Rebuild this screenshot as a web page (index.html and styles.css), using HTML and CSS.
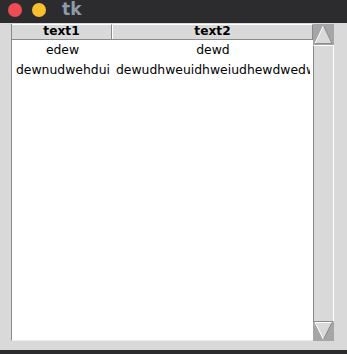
FILE: index.html
```html
<!DOCTYPE html>
<html>
<head>
<meta charset="utf-8">
<link rel="stylesheet" href="styles.css">
</head>
<body>
<div class="window">
  <div class="titlebar">
    <span class="dot red"></span>
    <span class="dot yellow"></span>
    <span class="title">tk</span>
  </div>
  <div class="content">
    <div class="tree">
      <div class="header">
        <div class="hcell h1">text1</div>
        <div class="hcell h2">text2</div>
      </div>
      <div class="row">
        <div class="cell c1">edew</div>
        <div class="cell c2">dewd</div>
      </div>
      <div class="row">
        <div class="cell c1 left">dewnudwehdui</div>
        <div class="cell c2 left">dewudhweuidhweiudhewdwedwe</div>
      </div>
    </div>
    <div class="scrollbar">
      <div class="arrow up">
        <svg width="21" height="21" viewBox="0 0 21 21">
          <polygon points="10.5,1.5 2,19.5 19,19.5" fill="#d9d9d9"/>
          <line x1="10.5" y1="1.5" x2="2" y2="19.5" stroke="#ffffff" stroke-width="1"/>
          <line x1="10.5" y1="1.5" x2="19" y2="19.5" stroke="#8a8a8a" stroke-width="1"/>
          <line x1="2" y1="19.5" x2="19" y2="19.5" stroke="#8a8a8a" stroke-width="1"/>
        </svg>
      </div>
      <div class="thumb"></div>
      <div class="arrow down">
        <svg width="21" height="19" viewBox="0 0 21 19">
          <polygon points="2,0.5 19,0.5 10.5,17.5" fill="#d9d9d9"/>
          <line x1="2" y1="0.5" x2="19" y2="0.5" stroke="#ffffff" stroke-width="1"/>
          <line x1="2" y1="0.5" x2="10.5" y2="17.5" stroke="#ffffff" stroke-width="1"/>
          <line x1="19" y1="0.5" x2="10.5" y2="17.5" stroke="#8a8a8a" stroke-width="1"/>
        </svg>
      </div>
    </div>
  </div>
  <div class="bottombar"></div>
</div>
</body>
</html>
```
FILE: styles.css
```css
* { box-sizing: border-box; }
html, body { margin: 0; padding: 0; }
body {
  width: 347px;
  height: 354px;
  overflow: hidden;
  background: #d9d9d9;
  font-family: "DejaVu Sans", sans-serif;
}
.window {
  display: flex;
  flex-direction: column;
  width: 347px;
  height: 354px;
}
.titlebar {
  height: 23px;
  background: #2c2c2e;
  display: flex;
  align-items: center;
  padding-left: 8px;
}
.dot {
  width: 14px;
  height: 14px;
  border-radius: 50%;
  margin-top: -4px;
}
.red { background: #ee4b53; }
.yellow { background: #f7c02f; margin-left: 10px; }
.title {
  margin-left: 16px;
  margin-top: -5px;
  color: #8c9bab;
  font-weight: bold;
  font-size: 17px;
}
.content {
  height: 327px;
  padding: 1px 0 0 11px;
  display: flex;
  align-items: flex-start;
}
.tree {
  width: 302px;
  height: 317px;
  background: #ffffff;
  border-left: 1px solid #8a8a8a;
  border-bottom: 1px solid #ececec;
  display: flex;
  flex-direction: column;
}
.header {
  display: flex;
  height: 16px;
  border-bottom: 1px solid #8a8a8a;
}
.hcell {
  height: 15px;
  background: #d9d9d9;
  border-top: 1px solid #ffffff;
  font-weight: bold;
  font-size: 12.2px;
  line-height: 13px;
  text-align: center;
  color: #000;
}
.h1 {
  width: 100px;
  border-right: 1px solid #8a8a8a;
}
.h2 {
  flex: 1;
  border-left: 1px solid #ffffff;
  border-right: 1px solid #8a8a8a;
}
.row {
  display: flex;
  height: 20px;
}
.cell {
  font-size: 12.4px;
  line-height: 20px;
  color: #000;
  text-align: center;
  white-space: nowrap;
  overflow: hidden;
}
.c1 { width: 101px; flex: none; }
.c2 { flex: 1; min-width: 0; }
.c1.left { text-align: left; padding-left: 4px; }
.c2.left { text-align: left; margin-left: 3px; margin-right: 3px; }
.scrollbar {
  width: 21px;
  height: 317px;
  display: flex;
  flex-direction: column;
  background: #d9d9d9;
}
.arrow {
  background: #a6a6a6;
  display: flex;
}
.arrow.up { height: 21px; }
.arrow.down { height: 19px; }
.thumb {
  flex: 1;
  background: #d9d9d9;
  border-top: 1px solid #ffffff;
  border-left: 1px solid #8a8a8a;
  border-right: 1px solid #ffffff;
  border-bottom: 1px solid #8a8a8a;
}
.bottombar {
  height: 4px;
  margin-top: auto;
  background: #2c2c2e;
}
```
